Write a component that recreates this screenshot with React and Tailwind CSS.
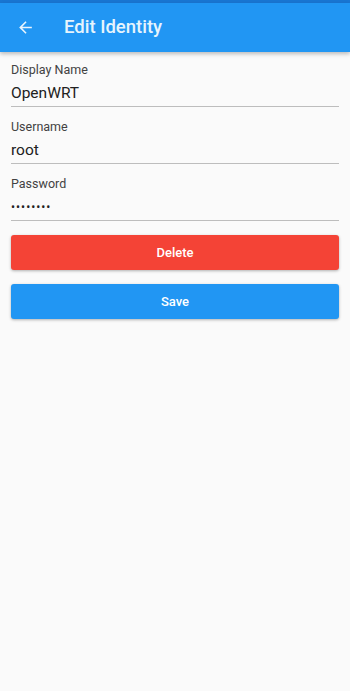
import React from "react";

const Field = ({ label, value, dots, first }) => (
  <div className={`pt-[9px] border-b border-[#bdbdbd] h-[54px] ${first ? "" : "mt-[3px]"}`}>
    <div className="text-[12.5px] leading-[16px] text-[#424242]">{label}</div>
    <div
      className={`mt-[4px] leading-[22px] text-[#212121] ${dots ? "text-[12px] tracking-[1px]" : "text-[15.5px]"}`}
    >
      {value}
    </div>
  </div>
);

export default function App() {
  return (
    <div className="min-h-[691px] bg-[#fafafa]" style={{ fontFamily: "Roboto, 'Liberation Sans', sans-serif" }}>
      <div className="h-[3px] bg-[#1976d2]" />
      <div className="h-[49px] bg-[#2196f3] flex items-center shadow-[0_2px_4px_rgba(0,0,0,0.25)]">
        <svg className="ml-[16px]" width="19" height="19" viewBox="0 0 24 24" fill="#e8f4fd">
          <path d="M20 11H7.83l5.59-5.59L12 4l-8 8 8 8 1.41-1.41L7.83 13H20v-2z" />
        </svg>
        <div className="ml-[29px] text-[18.5px] font-medium text-[#e6f4fd]">Edit Identity</div>
      </div>
      <div className="px-[11px]">
        <div className="pt-[1px]">
          <Field label="Display Name" value="OpenWRT" first />
          <Field label="Username" value="root" />
          <Field label="Password" value="••••••••" dots />
        </div>
        <button className="mt-[14px] w-full h-[35px] rounded-[3px] bg-[#f44336] text-white text-[13px] font-medium shadow-[0_1px_3px_rgba(0,0,0,0.3)]">
          Delete
        </button>
        <button className="mt-[14px] w-full h-[35px] rounded-[3px] bg-[#2196f3] text-white text-[13px] font-medium shadow-[0_1px_3px_rgba(0,0,0,0.3)]">
          Save
        </button>
      </div>
    </div>
  );
}
